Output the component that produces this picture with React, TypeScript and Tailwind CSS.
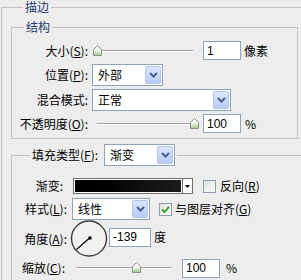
import React from "react";

const Chevron = () => (
  <svg width="9" height="6" viewBox="0 0 9 6">
    <path d="M1 1 L4.5 4.5 L8 1" fill="none" stroke="#4b5f8a" strokeWidth="2" />
  </svg>
);

function Dropdown({ text, className }: { text: string; className: string }) {
  return (
    <div className={`flex h-[22px] items-stretch border border-[#8ea3bd] bg-white ${className}`}>
      <div className="flex flex-1 items-center pl-[5px]">{text}</div>
      <div className="m-[1px] flex w-[16px] items-center justify-center rounded-[2px] border border-[#b4c6ee] bg-gradient-to-b from-[#dce6fd] to-[#b7cbf7]">
        <Chevron />
      </div>
    </div>
  );
}

function Input({ value, className }: { value: string; className: string }) {
  return (
    <div
      className={`flex h-[19px] items-center border border-[#8ea3bd] bg-white pl-[3px] font-['Liberation_Sans',Arial,sans-serif] text-[12px] ${className}`}
    >
      {value}
    </div>
  );
}

const Thumb = () => (
  <svg width="9" height="11" viewBox="0 0 9 11">
    <defs>
      <linearGradient id="tg" x1="0" y1="0" x2="0" y2="1">
        <stop offset="0" stopColor="#ffffff" />
        <stop offset="0.5" stopColor="#eef3ea" />
        <stop offset="1" stopColor="#9cc98a" />
      </linearGradient>
    </defs>
    <path d="M0.5 4.5 L4.5 0.5 L8.5 4.5 V10.5 H0.5 Z" fill="url(#tg)" stroke="#8b9488" strokeWidth="1" />
  </svg>
);

function Slider({
  className,
  trackClass,
  thumbClass,
}: {
  className: string;
  trackClass: string;
  thumbClass: string;
}) {
  return (
    <div className={`relative h-[12px] ${className}`}>
      <div className={`absolute top-[5px] h-[2px] border-t border-[#a3a3a3] bg-white ${trackClass}`} />
      <div className={`absolute top-0 ${thumbClass}`}>
        <Thumb />
      </div>
    </div>
  );
}

function Check({ checked }: { checked?: boolean }) {
  return (
    <div className="flex h-[13px] w-[13px] items-center justify-center border border-[#8a9bb2] bg-gradient-to-br from-[#e2e2de] to-[#fbfbfb]">
      {checked && (
        <svg width="9" height="9" viewBox="0 0 9 9">
          <path d="M1 4.5 L3.5 7 L8 1.8" fill="none" stroke="#22a122" strokeWidth="1.8" />
        </svg>
      )}
    </div>
  );
}

const U = ({ c }: { c: string }) => <span className="underline underline-offset-[1px]">{c}</span>;

export default function App() {
  return (
    <div className="h-[280px] w-[301px] overflow-hidden bg-[#ededed] font-['Noto_Sans_CJK_SC','Noto_Sans',sans-serif] text-[12px] leading-[14px] text-black">
      <fieldset className="ml-[1px] w-[330px] border border-[#c2c2c2] pl-[9px] pt-[6px]">
        <legend className="ml-[12px] h-[14px] px-[2px] leading-[14px] text-[#213b72]">描边</legend>

        <fieldset className="w-[287px] border border-[#c2c2c2] pb-[5px] pt-[7px]">
          <legend className="ml-[12px] h-[14px] px-[2px] leading-[14px] text-[#213b72]">结构</legend>

          <div className="flex h-[19px] items-center">
            <div className="w-[76px] text-right">
              大小(<U c="S" />):
            </div>
            <Slider className="ml-[4px] w-[107px]" trackClass="left-[5px] right-[6px]" thumbClass="left-[1px]" />
            <Input value="1" className="ml-[4px] w-[38px]" />
            <div className="ml-[3px]">像素</div>
          </div>

          <div className="mt-[4px] flex h-[22px] items-center">
            <div className="w-[76px] text-right">
              位置(<U c="P" />):
            </div>
            <Dropdown text="外部" className="ml-[4px] w-[71px]" />
          </div>

          <div className="mt-[3px] flex h-[22px] items-center">
            <div className="w-[76px] text-right">混合模式:</div>
            <Dropdown text="正常" className="ml-[4px] w-[139px]" />
          </div>

          <div className="mt-[3px] flex h-[19px] items-center">
            <div className="w-[76px] text-right">
              不透明度(<U c="O" />):
            </div>
            <Slider className="ml-[4px] w-[107px]" trackClass="left-[5px] right-[6px]" thumbClass="left-[98px]" />
            <Input value="100" className="ml-[4px] w-[38px]" />
            <div className="ml-[4px]">%</div>
          </div>
        </fieldset>

        <fieldset className="mt-[5px] h-[200px] w-[300px] border border-[#c2c2c2]">
          <legend className="ml-[18px] px-[2px]">
            <span className="flex h-[22px] items-center">
              <span>
                填充类型(<U c="F" />):
              </span>
              <Dropdown text="渐变" className="ml-[6px] w-[71px]" />
            </span>
          </legend>

          <div className="mt-[12px] flex h-[16px] items-center">
            <div className="w-[55px] pr-[4px] text-right">渐变:</div>
            <div className="ml-[6px] flex h-[16px] w-[120px] border border-[#6f6f6f] bg-white">
              <div className="m-[1px] flex-1 bg-gradient-to-r from-[#000000] via-[#0b0b0b] to-[#1c1c1c]" />
              <div className="flex w-[10px] items-center justify-center border-l border-[#6f6f6f] bg-white">
                <svg width="5" height="3" viewBox="0 0 5 3">
                  <path d="M0 0 H5 L2.5 3 Z" fill="#000" />
                </svg>
              </div>
            </div>
            <div className="ml-[10px]">
              <Check />
            </div>
            <div className="ml-[4px]">
              反向(<U c="R" />)
            </div>
          </div>

          <div className="mt-[4px] flex h-[22px] items-center">
            <div className="w-[55px] text-right">
              样式(<U c="L" />):
            </div>
            <Dropdown text="线性" className="ml-[5px] w-[78px]" />
            <div className="ml-[9px]">
              <Check checked />
            </div>
            <div className="ml-[3px]">
              与图层对齐(<U c="G" />)
            </div>
          </div>

          <div className="flex h-[38px] items-center">
            <div className="w-[55px] text-right">
              角度(<U c="A" />):
            </div>
            <svg className="ml-[3px]" width="38" height="38" viewBox="0 0 38 38">
              <circle cx="19" cy="18.5" r="17.5" fill="#f1f1f1" stroke="#3c3c3c" strokeWidth="1.4" />
              <line x1="19.5" y1="18" x2="6.5" y2="29.5" stroke="#000" strokeWidth="1.1" />
              <rect x="18.5" y="16.5" width="3" height="3" fill="#000" />
            </svg>
            <Input value="-139" className="mb-[4px] ml-[1px] w-[42px]" />
            <div className="mb-[4px] ml-[3px]">度</div>
          </div>

          <div className="mt-[1px] flex h-[18px] items-center">
            <div className="w-[55px] pr-[2px] text-right">
              缩放(<U c="C" />):
            </div>
            <Slider className="ml-[5px] w-[106px]" trackClass="left-[4px] right-[6px]" thumbClass="left-[60px]" />
            <Input value="100" className="ml-[4px] w-[38px]" />
            <div className="ml-[6px]">%</div>
          </div>
        </fieldset>
      </fieldset>
    </div>
  );
}
